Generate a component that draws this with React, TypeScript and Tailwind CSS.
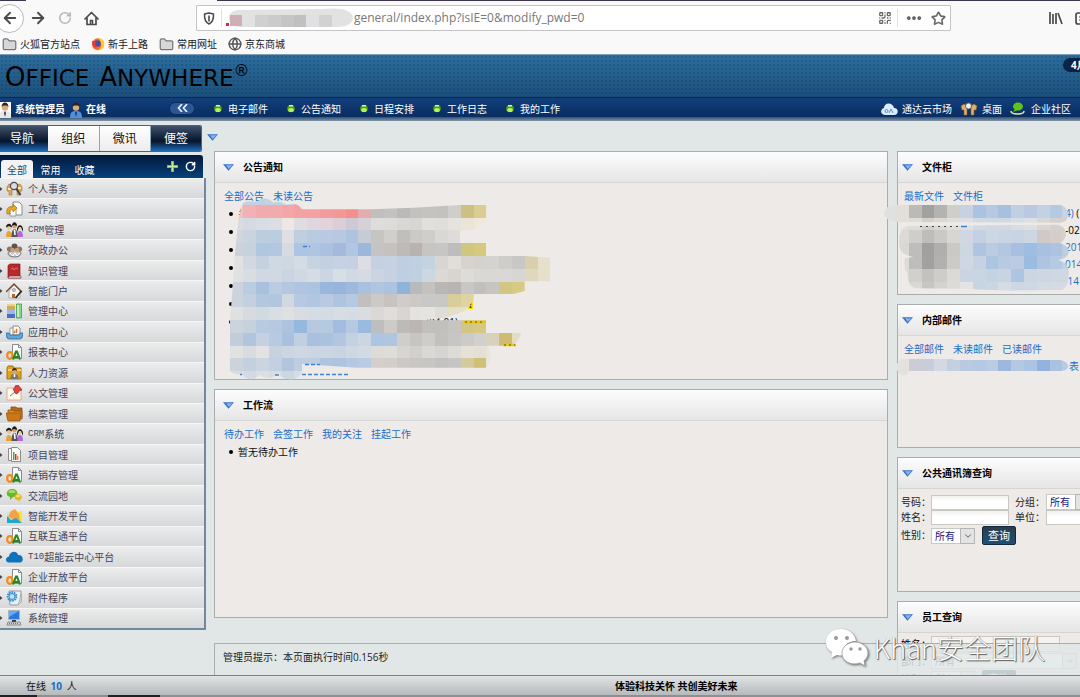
import React from "react";
import { ArrowLeft, ArrowRight, RotateCw, Star, Folder, Globe, ChevronDown, QrCode, Ellipsis } from "lucide-react";

const ui = "font-['Open_Sans','Noto_Sans_CJK_SC',sans-serif]";

type MenuItem = { icon: string; latin?: string; label: string };

const MENU: MenuItem[] = [
  { icon: "search", label: "个人事务" },
  { icon: "flow", label: "工作流" },
  { icon: "crm", latin: "CRM", label: "管理" },
  { icon: "group", label: "行政办公" },
  { icon: "book", label: "知识管理" },
  { icon: "portal", label: "智能门户" },
  { icon: "blocks", label: "管理中心" },
  { icon: "tray", label: "应用中心" },
  { icon: "oa", label: "报表中心" },
  { icon: "hr", label: "人力资源" },
  { icon: "pin", label: "公文管理" },
  { icon: "folders", label: "档案管理" },
  { icon: "crm", latin: "CRM", label: "系统" },
  { icon: "report", label: "项目管理" },
  { icon: "oa", label: "进销存管理" },
  { icon: "chat", label: "交流园地" },
  { icon: "picture", label: "智能开发平台" },
  { icon: "oa", label: "互联互通平台" },
  { icon: "cloud", latin: "T10", label: "超能云中心平台" },
  { icon: "oa", label: "企业开放平台" },
  { icon: "gear", label: "附件程序" },
  { icon: "computer", label: "系统管理" },
];

function Page({ d = "M6 1h7l3 3v11H6z" }: { d?: string }) {
  return <path d={d} fill="#fafafa" stroke="#8b8b8b" />;
}

const ICONS: Record<string, React.ReactNode> = {
  search: (
    <>
      <path d="M1 6l2-3 3 1v10H3v-4H1zM16 6l-2-3-3 1v10h3v-4h2z" fill="#dca55a" stroke="#a97431" strokeWidth=".6" />
      <path d="M2 7h3v2H2zM12 6h3v2h-3z" fill="#f6e3c0" />
      <circle cx="8" cy="5" r="3.6" fill="#d9dee1" stroke="#4b4b4b" strokeWidth="1.2" />
      <path d="M10.500 8l4 6" stroke="#3c3c3c" strokeWidth="1.800" />
    </>
  ),
  flow: (
    <>
      <Page d="M7 1h6l3 3v10H7z" />
      <path d="M4 6h6v9H4z" fill="#fff" stroke="#999" />
      <path d="M1 13C0 7 3 5 7 6V3l4 4-4 4V9C4 8 3 10 4 13z" fill="#eda91e" stroke="#a8730c" strokeWidth=".7" />
    </>
  ),
  crm: (
    <>
      <path d="M0 15c0-5 1-6 3-6s3 2 3 6z" fill="#e6a53b" />
      <path d="M11 15c0-5 1-6 3-6s3 2 3 6z" fill="#b566d9" />
      <path d="M5.500 15c0-5 1-8 3-8s3 3 3 8z" fill="#55555a" />
      <path d="M8 8h1v5z" fill="#fff" stroke="#fff" />
      <circle cx="3" cy="5.500" r="2.400" fill="#edc594" />
      <path d="M0 5.500c0-5 6-5 6 0L3 4z" fill="#1d1d1d" />
      <circle cx="8.500" cy="4" r="2.400" fill="#d99f6c" />
      <path d="M6 4c0-5 5-5 5 0L8 3z" fill="#1d1d1d" />
      <circle cx="14" cy="5.500" r="2.400" fill="#efc8a2" />
      <path d="M11 10c-1-9 7-9 6 0l-2-5-2 0z" fill="#151515" />
    </>
  ),
  group: (
    <>
      <ellipse cx="8.500" cy="11.500" rx="6.500" ry="3.500" fill="#c9c9c9" stroke="#777" />
      <circle cx="3.500" cy="7" r="2.600" fill="#8b7765" />
      <circle cx="13.500" cy="7" r="2.600" fill="#8b7765" />
      <circle cx="8.500" cy="4.500" r="3" fill="#5d5148" />
      <circle cx="6.500" cy="8" r="2.200" fill="#c99b78" />
      <circle cx="11" cy="8" r="2.200" fill="#c99b78" />
      <path d="M4 11l3 3 2-3 2 3 3-3" stroke="#fff" fill="none" />
    </>
  ),
  book: (
    <>
      <path d="M2 2.500L4 1h10v12l1 2H2z" fill="#b92a2d" stroke="#7e1d22" strokeWidth=".7" />
      <path d="M2 14.500L4 13h11v2H2z" fill="#ddd4cc" stroke="#8d2327" strokeWidth=".5" />
      <path d="M5 6l2-1 1 2 2-2 2 1" stroke="#e0837e" strokeWidth=".8" fill="none" />
    </>
  ),
  portal: (
    <>
      <path d="M3 8l5-6 6 6v7H3z" fill="#f8f5ef" stroke="#999" strokeWidth=".7" />
      <path d="M0 9l8-8 8 8" fill="none" stroke="#6f4a2f" strokeWidth="1.300" />
      <circle cx="8" cy="7" r="1.600" fill="#bcc9d5" stroke="#777" strokeWidth=".5" />
      <path d="M6 11h3v4H6z" fill="#ad6535" />
      <path d="M15.500 8l-6 7" stroke="#222" strokeWidth="1.800" />
    </>
  ),
  blocks: (
    <>
      <path d="M1 1h8v6H1z" fill="#cfab52" />
      <path d="M1 1h8v2H1z" fill="#ecd28f" />
      <path d="M1 7h8v8H1z" fill="#4d6dc2" />
      <path d="M1 7h8v4H1z" fill="#a3b5e6" />
      <path d="M10.500 1h5v14h-5z" fill="#88d587" stroke="#4d9b51" strokeWidth=".8" />
      <path d="M11 2h2v12h-2z" fill="#c3efc0" />
    </>
  ),
  tray: (
    <>
      <path d="M4 4h5l3 2v7H4z" fill="#fff" stroke="#999" />
      <path d="M7 2h5l2 2v7H7z" fill="#fafafa" stroke="#888" />
      <path d="M8 9V7h1v2zM10 9V5h1v4z" fill="#df5a2b" stroke="#df8e32" strokeWidth=".6" />
      <path d="M0 9h3l1 2h9l1-2h3l-1 5-2 1H3l-2-1z" fill="#5ea7d8" stroke="#24699c" strokeWidth=".8" />
    </>
  ),
  oa: (
    <>
      <Page d="M6.500.500h6l3 3v11h-9z" />
      <path d="M12.500.500v3h3" fill="none" stroke="#8b8b8b" />
      <ellipse cx="3.800" cy="11.500" rx="2.600" ry="3.300" fill="none" stroke="#f58a16" strokeWidth="2.200" />
      <path d="M7 15.500l3-8h1l3 8M8.500 13h5" fill="none" stroke="#218b22" strokeWidth="2.100" />
    </>
  ),
  hr: (
    <>
      <path d="M1 3l1-2h5l1 2h7v11H1z" fill="#dfa31e" stroke="#a6740d" />
      <path d="M2 4h13v2H2z" fill="#f4cf62" />
      <circle cx="8.500" cy="6.500" r="2.200" fill="#d8a77d" />
      <path d="M6 6c0-4 5-4 5 0L9 5z" fill="#30271e" />
      <path d="M4.500 14c0-4 1-5 4-5s4 1 4 5z" fill="#777" />
      <path d="M8.500 9v3" stroke="#fff" strokeWidth="1.500" />
    </>
  ),
  pin: (
    <>
      <path d="M1 3h14v12H1z" fill="#fffbe8" stroke="#e5aa8e" />
      <path d="M9 7l-5 4" stroke="#777" />
      <path d="M7 4l3 5 2-1 1-2 3-1-4-5-3 1v2z" fill="#dd4540" stroke="#a72424" strokeWidth=".7" />
    </>
  ),
  folders: (
    <>
      <path d="M5 1h5l1 1h5v10H5z" fill="#b96a15" stroke="#7b430b" strokeWidth=".7" />
      <path d="M2 4h5l1 1h8v8H2z" fill="#d88a2c" stroke="#7b430b" strokeWidth=".7" />
      <path d="M0 7h15l-1 8H2z" fill="#cb7718" stroke="#8f500e" strokeWidth=".7" />
    </>
  ),
  report: (
    <>
      <Page d="M2.500 1.500h7v12h-7z" />
      <Page d="M5.500.500h6l3 3v11h-9z" />
      <path d="M7 5h1.500v8H7z" fill="#5e9b42" />
      <path d="M9 7h1.500v6H9z" fill="#d83525" />
      <path d="M11 9h1.500v4H11z" fill="#f09224" />
    </>
  ),
  chat: (
    <>
      <path d="M6 1c7 0 7 8 1 8l-3 3V9C-1 8 0 1 6 1z" fill="#69b72c" />
      <ellipse cx="6" cy="3.500" rx="3.500" ry="1.500" fill="#a4dc6e" />
      <path d="M12 6c5 0 5 6 1 6l2 2-4-2c-4-1-3-6 1-6z" fill="#eab91d" />
      <ellipse cx="12" cy="8" rx="2.300" ry="1" fill="#fae27d" />
    </>
  ),
  picture: (
    <>
      <path d="M9 5l7-2v12H9z" fill="#f2ea28" />
      <path d="M1 4h6v8H1z" fill="#c7e7d0" />
      <path d="M2 9l3-6 4-2 4 5 1 8z" fill="#f7a04b" />
      <path d="M1 15V8l4 4 5-2 6 5z" fill="#22a7cf" />
    </>
  ),
  cloud: (
    <path d="M3 13.500c-4 0-4-5.500 0-6C4 1.500 11 1.500 12 6c6-.5 6 7.500 2 7.500z" fill="#0e73bd" />
  ),
  gear: (
    <>
      <path d="M3 1h12v11l-3 3H4z" fill="#e9f0f3" stroke="#999" />
      <path d="M15 4v8l-3 3c2-4 2-7 3-11z" fill="#fff" stroke="#aaa" />
      <circle cx="6" cy="6.500" r="4.300" fill="none" stroke="#318cd0" strokeWidth="2" strokeDasharray="1.600 .8" />
      <circle cx="6" cy="6.500" r="3" fill="#bfe1f8" stroke="#318cd0" />
    </>
  ),
  computer: (
    <>
      <path d="M2.500.500h11v9h-11z" fill="#2978e0" stroke="#aab3bb" />
      <path d="M3 1h10L3 7z" fill="#63acf5" />
      <path d="M6 10h4v2H6z" fill="#333" />
      <path d="M2 12h12l1 3H1z" fill="#d1d3d5" stroke="#777" strokeWidth=".8" />
      <path d="M3 13.500h10" stroke="#777" strokeDasharray="1 1" />
    </>
  ),
};

/* Pixelated privacy cover: rows of colour cells on a 12.8 unit grid. */
const CELL = 12.8;
type Row = [row: number, col: number, colors: string];

const NOTICE_ROWS: Row[] = [
  [14, 18, "ccd6e0 c4d1df c3d2e0 c3d2e0 c3d2e0 c8d4e0"],
  [15, 18, "ccd6e0 c4d1df c3d2e0 c3d2e0 cdd3de e8b2b6 d8d0cd d8d0cd d8d0cd d8d0cd d8d0cd d3d1ce cfcdca c9c7c5 c9c7c5 c9c7c5 c9c7c5 cfcdca cdc082 d9cd94"],
  [16, 18, "e9c3c5 f2b1b3 f1abac f1abac f2a6a8 f3a1a3 f3a2a2 f39b9a f39897 f68e8b e2adaf c1bfbe c3c2c0 bbbab8 c3c1bf c4c3c0 c3c2c0 d0cecb cdc082 d9cd94 e5dcba"],
  [17, 18, "d8dbe0 d5d9e1 d8dce3 dbdfe5 eee7e3 dfdde2 dfd7dd e2d3da dccdd6 cdcad6 d8d0d7 dfdddb dedcd9 dad8d5 d8d6d3 e2e0dc e0deda e5e3dc ebe5d8 eee9d9"],
  [18, 18, "d2d6dc cad4e0 bdcde0 bccde1 dfdfe3 c0cfe0 b9cbe1 b8c9e1 b9c8e1 aec3e0 c6ccd5 c6c5c2 d1cfcc c1bfbd cccac7 d0cecc dad8d5 dedcda eae6df"],
  [19, 18, "cbd2dc c7d2df b0c7e0 b1c8e0 d7dbe1 acc5e2 afc5e1 acc1df a3badd b1c6e2 9bb7dc c6c4c3 c5c1be bebab7 b8b3b0 c6c5c2 c7c6c4 bebdbb d1c680 d6c97d"],
  [20, 18, "e1e1e2 d1d8e1 c3d1e0 ced9e3 cfd8e2 d3dbe4 c6d4e2 c3d0e0 c6d2e2 c5d1e2 dcdee3 c3d1e2 c6d2e2 bfcee0 bfd0e0 c5d2e1 d8d6d2 e1deda d7d4d0 d3d2ce d5d3d0 cfcdca c9c7c4 d9cfac e6e0cb"],
  [21, 18, "e0e1e2 d9dde1 d0d8e2 d0d9e3 cbd5e1 d0d8e2 d5dce4 cbd6e2 d8dee5 d1d9e3 d6dbe3 cbd5e2 c6d2e2 bfcfe3 bfd0e0 cdd7e2 dcd9d5 d8d5d1 dedcd8 d9d8d4 dad8d4 dad8d4 d8d6d2 dfd8bd e6e0ca"],
  [22, 18, "cdd3db b9cde0 a9c1df bdcbe1 b5c7e0 afc4e0 abc4df 9bb6dc 97b5dc 9fb9dc a9c0de b0c5df acc3df 8eb4dc b7bbbe c5c1be b9b6b4 b7b5b4 c9c7c5 c1c0be c6c5c3 d2c782 d7cb83"],
  [23, 18, "cbd3dc c4d0df b3c7df b2c6de d0d8e1 b7c8e1 b1c7e1 b8c9e1 afc4df b6c9e2 c2c0bf cdc9c6 c6c3c1 cfccc9 cdc9c6 c9c8c6 c9c8c6 d7ce9b ddd4a2"],
  [24, 18, "dfe0e1 d7dbe0 d1d9e1 d8dee4 dee0e2 d9dde2 d5dde4 d5dbe4 d8dce3 d5dce3 dadcdf dad9d6 e0ddda d8d6d2 e6e3df e6e4e1 deddd9 e3dfc8 e6e0c8"],
  [25, 18, "cbd3dc c6d1de b8cadf b6c9e0 acc4e0 96b8df b9c8e1 b5c9e1 a4bce0 b6c9e1 9bbadf bdbfbf cecac7 bdbbb8 bbb6b3 c2c0bd c1c0be c6c5c2 d2c684 d6c880"],
  [26, 18, "c3cdd9 b1c5dd c5d1e3 b8c9e1 a9c1df c0cfe1 a9c0df aac2df b3c6e0 c3d1e1 ccd6e2 acc5e2 afc5e1 cfcecb c7c5c3 cecdca c2c1be c8c6c4 cdcbc9 d2d0cd d7d2bd cdbc71 e3dbc2"],
  [27, 18, "e0e1e2 d8dce1 e2e2e3 c7d2df ccd6e1 cfd8e2 cbd6e2 cbd6e3 c8d4e2 ced8e3 d2dbe5 dedbd6 dfddda d7d5d2 d2d0ce dad8d4 d6d4d0 dedbd7 e5e1d9 e5e0d6 e9e5de"],
  [28, 18, "ccd3db c4d0df cbd5e0 c3d0df b2c5df bdcde2 bccee2 aec4df adc3df b5c7e1 b9cbe2 d5cecc d3ceca ccc8c5 cac7c3 c7c6c4 c3c2c0 c7c5c3 d4ca9b cec078 e9e5de"],
  [29, 18, "d7dce1 d3dae3 dadfe5 d7dce1 cdd7df d4dce4"],
];

const FILE_ROWS: Row[] = [
  [15, 68, "dfe0df dfe0df e2dfdb d0cdca c5c3c0 cfccc9 dedbd7 c5cfe0 c0cfe0 c5d2e0 c5d2e0 c5d2e0"],
  [16, 68, "dfe1e0 dfe1e0 e2dfda bcbab8 a1a1a0 b4b3b1 cfcecb c6d1e2 aac3e2 b6c9e0 a7c0df c1cfe3 bac8e3 c2d1e3 b4cae3 c8d4e1"],
  [17, 68, "dfe1e0 dfe1e0 e2dfda dfddd9 d3d0cc dcd9d4 e0ded9 dde0e3 d1dae3 cfd9e3 d0d9e3 d7dde3 dce0e3 dad6d3 d5d0ce d4cfce"],
  [18, 68, "e0e1e0 e0e1e0 dcdad7 d0cecb bfbdbb cbc9c6 d8d6d3 d1d7e2 c3d1e3 cdd7e3 c9d5e3 c8d4e3 cdd7e4 cfcac7 d3ceca d6d1cd"],
  [19, 69, "dedcd9 dad8d5 bebdbb a0a09f b0afad cac9c6 ced6e2 adc5e1 bacbe2 b3c7e2 a7bfe0 9dbee0 a8c1e0 adc3e1 bdcde1"],
  [20, 69, "dedcd9 dddbd8 bfbdbb a1a1a0 b3b1af cccbc8 ced7e3 c5d2e3 acc6e1 b8cae2 bdcbe2 9bbce1 aec4e1 b5cae2 c1d0e2"],
  [21, 69, "dedcd9 dbdad6 d2d0cd c3c2c0 cfcdca dcdad7 cad4e2 c8d5e2 c5d2e2 c8d4e2 acc5e2 cbd5e3 ced6e3 ced7e2 ced8e3"],
  [22, 69, "dedcd9 dbdad6 dad8d4 c8c6c4 d4d3d0 dddbd8 e4e3e5 c8d4e1 cbd6e3 d6dce4 ced7e3 ced7e3 d3dae4 d4dbe4 d2dae3"],
];

const MAIL_ROWS: Row[] = [
  [27, 69, "e4e2dc e4e2dc e3e0dc e3e0dc e0dfdc dedddb"],
  [28, 69, "e4e2dc e4e2dc cdcbd5 c9cdda d3d9e3 c3d0e2 b8c9e1 b5c9e2 bbcbe2 9cb8dd b6c8e1 acc3e1 92b3de aac1e0 b7cce3"],
  [29, 69, "e4e2dc e4e2dc"],
];

function Mosaic({ id, rows, outline, origin }: { id: string; rows: Row[]; outline: string; origin: [number, number] }) {
  return (
    <>
      <clipPath id={id}>
        <path d={outline} transform={`translate(${origin[0]} ${origin[1]}) scale(0.33333)`} />
      </clipPath>
      <g clipPath={`url(#${id})`} shapeRendering="crispEdges">
        {rows.map(([r, c, colors]) =>
          colors.split(" ").map((color, i) => (
            <rect key={`${r}-${i}`} x={(c + i) * CELL} y={r * CELL} width={CELL} height={CELL} fill={`#${color}`} />
          ))
        )}
      </g>
    </>
  );
}

function Covers() {
  return (
    <svg className="pointer-events-none absolute left-0 top-0 h-full w-full overflow-hidden" aria-hidden="true">
      <g transform="translate(0 -121)">
        <Mosaic
          id="cover-notice"
          rows={NOTICE_ROWS}
          origin={[210, 140]}
          outline="M98 190Q110 180 138 186Q165 164 190 188Q210 180 230 194Q262 184 276 208L483 208L610 203L750 195L829 195V250Q800 274 750 272V309H829V348H944L1020 353V424H944V453L910 462H791V482L765 512L714 532L640 541H829V578H934Q925 605 905 617H835Q852 650 829 683H440L276 672V695Q265 720 240 718Q215 718 205 698Q180 728 150 705Q120 732 95 703Q50 710 55 655Q65 620 55 585Q60 545 65 480L75 340L85 240Z"
        />
        <Mosaic
          id="cover-files"
          rows={FILE_ROWS}
          origin={[860, 140]}
          outline="M105 195H600Q625 200 625 225Q622 247 600 248L110 246Q72 240 72 220Q76 196 105 195ZM140 258L500 255L595 254Q620 262 618 285Q612 305 600 309Q628 318 625 340Q622 355 595 360Q628 370 626 400Q628 440 605 450L450 452L300 446L165 445Q140 435 143 400Q130 385 135 355L160 351Q116 345 118 310Q115 270 140 258Z"
        />
        <Mosaic
          id="cover-mail"
          rows={MAIL_ROWS}
          origin={[860, 140]}
          outline="M125 657L275 657L285 660L600 660Q625 665 625 680Q620 693 600 693L150 693Q140 712 122 705Q105 690 112 670Z"
        />
        <path d="M303 246.500h7M305 364.500h15M240 374.500h2M275 375h5M302 374.500h48" stroke="#3c82d6" strokeWidth="1.500" strokeDasharray="4 2" fill="none" />
        <path d="M464 322h22M503 345h13" stroke="#e6c90c" strokeWidth="2.500" />
        <path d="M465 322h20M504 345h11" stroke="#5b4b12" strokeWidth="1" strokeDasharray="2 3" />
        <path d="M920 226.500h38" stroke="#444" strokeWidth="1" strokeDasharray="2 4" />
        <path d="M961 226.500h6" stroke="#3c82d6" strokeWidth="1.500" />
      </g>
    </svg>
  );
}

function Triangle() {
  return (
    <svg width="11" height="7" viewBox="0 0 11 7" className="shrink-0" aria-hidden="true">
      <path d="M0 .3h11L5.500 6.800z" fill="#3570cf" />
      <path d="M3 1.200h6.500L5.800 5z" fill="#86b2ee" />
    </svg>
  );
}

function Panel({ title, className, inset = "pl-[8px]", children }: { title: string; className: string; inset?: string; children: React.ReactNode }) {
  return (
    <section className={`overflow-hidden border border-[#a9adb0] bg-[#eeeae7] ${className}`}>
      <h2 className={`flex h-[31px] items-center gap-[9px] border-b border-[#d6d6d6] bg-gradient-to-b from-[#fdfdfd] to-[#e5e5e5] text-[10px] font-bold text-black ${inset}`}>
        <Triangle />
        {title}
      </h2>
      {children}
    </section>
  );
}

function Links({ items, inset = "pl-[9px]" }: { items: string[]; inset?: string }) {
  return (
    <nav className={`flex gap-[9px] pt-[5px] text-[10px] leading-[17px] text-[#1a6dcc] ${inset}`}>
      {items.map((t) => (
        <a key={t} href="#" className="whitespace-nowrap">{t}</a>
      ))}
    </nav>
  );
}

function Bullet({ children }: { children?: React.ReactNode }) {
  return (
    <li className="flex h-[18px] items-center gap-[5px] text-[10px] text-[#111]">
      <span className="size-[4px] shrink-0 rounded-full bg-black" />
      {children}
    </li>
  );
}

function Pick({ id, className }: { id: string; className: string }) {
  return (
    <span className={`relative inline-flex h-[16px] items-center ${className}`}>
      <select id={id} className="h-full w-full appearance-none border border-[#c9c9c3] bg-white pl-[3px] text-[10px] leading-[14px] text-[#14147d]">
        <option>所有</option>
      </select>
      <span className="pointer-events-none absolute bottom-0 right-0 top-0 flex w-[15px] items-center justify-center border border-[#b5b5b5] bg-[#e3e3e3]">
        <ChevronDown size={10} className="text-[#444]" />
      </span>
    </span>
  );
}

const field = "h-[15px] w-[78px] border border-[#c9c7c0] bg-gradient-to-b from-[#f0f0ee] to-white to-40%";

function ContactQuery() {
  return (
    <form className="flex flex-col gap-px pl-[3px] pt-[5px] text-[10px] text-[#222]">
      <div className="grid w-[260px] grid-cols-[30px_84px_31px_100px] items-center leading-[15px]">
        <label htmlFor="contact-no">号码：</label>
        <input id="contact-no" className={field} />
        <label htmlFor="contact-group">分组：</label>
        <Pick id="contact-group" className="w-[44px]" />
        <label htmlFor="contact-name">姓名：</label>
        <input id="contact-name" className={field} />
        <label htmlFor="contact-unit">单位：</label>
        <input id="contact-unit" className={field} />
      </div>
      <div className="flex items-center">
        <label htmlFor="contact-sex" className="w-[30px]">性别：</label>
        <Pick id="contact-sex" className="w-[44px]" />
        <button type="button" className="ml-[7px] h-[19px] w-[34px] rounded-[2px] border border-[#12293c] bg-gradient-to-b from-[#2b3d4b] to-[#1f4f75] text-[11px] leading-[16px] text-white">
          查询
        </button>
      </div>
    </form>
  );
}

function StaffQuery() {
  return (
    <form className="grid w-[260px] grid-cols-[30px_200px] items-center gap-y-[1px] pl-[3px] pt-[3px] text-[10px] leading-[16px]">
      <label htmlFor="staff-name">姓名：</label>
      <input id="staff-name" className="h-[16px] w-[129px] border border-[#c9c7c0] bg-[#f4f3f0]" />
      <label htmlFor="staff-dept">部门：</label>
      <Pick id="staff-dept" className="w-[146px]" />
      <label htmlFor="staff-sex">性别：</label>
      <div className="flex items-center gap-[7px]">
        <Pick id="staff-sex" className="w-[44px]" />
        <button type="button" className="h-[18px] w-[34px] rounded-[2px] bg-[#24425a] text-[11px] leading-[16px] text-white">查询</button>
      </div>
    </form>
  );
}

function Chrome() {
  return (
    <header className="shrink-0 bg-[#f9f9fa] text-[#4a4a4f]">
      <div className="flex h-px">
        <span className="w-[26px] bg-[#3b364c]" />
        <span className="w-[191px]" />
        <span className="flex-1 bg-[#3b364c]" />
      </div>
      <div className="flex h-[34px] items-center overflow-hidden">
        <div className="flex w-[196px] shrink-0 items-center">
          <button aria-label="后退" className="-ml-[5px] flex size-[29px] shrink-0 items-center justify-center rounded-full border border-[#b9b9bb] bg-white">
            <ArrowLeft size={18} strokeWidth={2.500} />
          </button>
          <button aria-label="前进" className="ml-[5px]"><ArrowRight size={18} strokeWidth={2.500} /></button>
          <button aria-label="刷新" className="ml-[11px] text-[#b9b9bb]"><RotateCw size={14} strokeWidth={2.800} /></button>
          <button aria-label="主页" className="ml-[12px]">
            <svg width="15" height="15" viewBox="0 0 15 15" aria-hidden="true">
              <path d="M1 8l6.500-6.500L14 8M3 7v6.500h9V7" fill="none" stroke="#4a4a4f" strokeWidth="1.700" strokeLinejoin="round" strokeLinecap="round" />
              <path d="M6.500 13V9.500h2V13" fill="none" stroke="#4a4a4f" strokeWidth="1.500" />
            </svg>
          </button>
        </div>
        <div className="flex h-[26px] w-[755px] shrink-0 items-center rounded-[1px] border border-[#c4c4c6] bg-white pl-[6px] pr-[4px]">
          <svg width="12" height="13" viewBox="0 0 12 13" className="shrink-0" aria-hidden="true">
            <path d="M6 1l4.500 1c.3 5-.7 8-4.500 10C2.200 10 1.200 7 1.500 2z" fill="none" stroke="#4a4a4f" strokeWidth="1.500" strokeLinejoin="round" />
            <path d="M6 3.500v6" stroke="#4a4a4f" strokeWidth="1.600" />
          </svg>
          <span className="ml-[6px] h-[18px] w-px bg-[#e0e0e1]" />
          <svg width="128" height="20" viewBox="0 0 128 20" className="ml-[4px] shrink-0" aria-hidden="true">
            <path d="M0 15h3v3H0z" fill="#d7264a" />
            <path d="M12 2L95 1Q126-2 127 10Q126 19 110 19H14Q3 19 3 10Q3 3 12 2z" fill="#e2e2e3" />
            <path d="M4 7h12v11H4z" fill="#cfafb6" />
            <path d="M29 7h13v12H29z" fill="#d0d0d0" />
            <path d="M42 7h13v12H42z" fill="#cbcbcc" />
            <path d="M55 7h13v12H55z" fill="#c5c5c5" />
            <path d="M68 7h12v12H68z" fill="#c0c0c0" />
            <path d="M80 7h13v12H80z" fill="#e0e0e2" />
            <path d="M93 7h13v12H93z" fill="#d2d2d3" />
          </svg>
          <label htmlFor="address" className="hidden">地址</label>
          <input
            id="address"
            readOnly
            value="general/index.php?isIE=0&modify_pwd=0"
            className="min-w-0 flex-1 bg-transparent text-[12px] text-[#77777a] outline-none"
          />
          <QrCode size={14} strokeWidth={2.200} className="text-[#66666a]" />
          <span className="ml-[5px] h-[18px] w-px bg-[#e0e0e1]" />
          <Ellipsis size={18} strokeWidth={3} className="ml-[7px] text-[#555]" />
          <Star size={15} strokeWidth={2.600} className="ml-[8px] text-[#666]" />
        </div>
        <svg width="36" height="16" viewBox="0 0 36 16" className="ml-[97px] shrink-0" aria-hidden="true">
          <path d="M2 2v12M5 4v10M8 3v11M10 3l4 11" stroke="#4a4a4f" strokeWidth="1.700" fill="none" />
          <rect x="28" y="3" width="14" height="11" rx="2" stroke="#4a4a4f" strokeWidth="1.700" fill="none" />
          <path d="M31 7h5M31 10h5" stroke="#4a4a4f" />
        </svg>
      </div>
      <nav className="flex h-[19px] items-center pb-px pl-[2px] text-[10px] text-[#18181a]">
        <a href="#" className="flex w-[89px] items-center gap-[3px]"><Folder size={15} strokeWidth={2} className="fill-[#d7d7d9] text-[#77777a]" />火狐官方站点</a>
        <a href="#" className="flex w-[68px] items-center gap-[3px]">
          <svg width="14" height="14" viewBox="0 0 14 14" aria-hidden="true">
            <circle cx="7" cy="7.300" r="6" fill="#f5682a" />
            <path d="M7 1c5 0 7 4 6 8-1 3-4 5-7 4 5-1 6-6 1-12z" fill="#ffca2d" />
            <circle cx="6.500" cy="6.500" r="3.200" fill="#3454b4" />
            <path d="M1 4c2 0 3 1 5 2-2 0-2 3 1 3-2 3-6 1-6-5z" fill="#e8323c" />
          </svg>
          新手上路
        </a>
        <a href="#" className="flex w-[69px] items-center gap-[3px]"><Folder size={15} strokeWidth={2} className="fill-[#d7d7d9] text-[#77777a]" />常用网址</a>
        <a href="#" className="flex items-center gap-[3px]"><Globe size={14} strokeWidth={2.400} className="text-[#555]" />京东商城</a>
      </nav>
    </header>
  );
}

function Person({ coat, className }: { coat: string; className: string }) {
  return (
    <svg width="12" height="16" viewBox="0 0 12 16" className={`shrink-0 ${className}`} aria-hidden="true">
      <path d="M0 16c0-6 2-7 6-7s6 1 6 7z" fill={coat} />
      <path d="M6 9l-1 2 1 4 1-4z" fill="#234" />
      <circle cx="6" cy="5.500" r="3.200" fill="#dba97e" />
      <path d="M2.500 5c0-6 7-6 7 0L8 3.500H4z" fill="#2c2018" />
    </svg>
  );
}

function TopBar() {
  return (
    <div className="shrink-0">
      <div className="flex h-[43px] items-start justify-between overflow-hidden border-t border-[#7d9eb5] bg-[radial-gradient(circle,rgba(8,40,75,0.2)_0.700px,transparent_1px),linear-gradient(#2d6d9c,#1b4f7b)] bg-[length:4px_4px,100%_100%]">
        <h1 className="flex items-baseline pl-[5px] pt-[6px] font-['DejaVu_Sans',sans-serif] text-[23px] leading-[32px] text-black">
          <span className="text-[26px]">O</span>FFICE<span className="ml-[10px] text-[26px]">A</span>NYWHERE
          <span className="self-start text-[16px] leading-[20px]">®</span>
        </h1>
        <span className="mt-[3px] h-[14px] w-[17px] overflow-hidden whitespace-nowrap rounded-l-full bg-[#0a2347] pl-[8px] text-[10px] font-bold leading-[14px] text-white">4月</span>
      </div>
      <div className="flex h-[20px] items-center border-t border-[#0a2a56] bg-gradient-to-b from-[#123f7b] to-[#082d62] text-[10px] text-white">
        <div className="flex w-[214px] shrink-0 items-center pt-[4px] font-bold">
          <Person coat="#e8e8e8" className="-ml-px bg-white" />
          <span className="ml-[4px]">系统管理员</span>
          <Person coat="#4d90dc" className="ml-[5px]" />
          <span className="ml-[4px]">在线</span>
          <button aria-label="收起" className="mb-[3px] ml-[63px] flex h-[13px] w-[26px] items-center justify-center rounded-full border border-[#0a2a58] bg-[#2b5795]">
            <svg width="11" height="8" viewBox="0 0 11 8" aria-hidden="true">
              <path d="M5 0L1.500 4L5 8M10 0L6.500 4L10 8" fill="none" stroke="#e6eefa" strokeWidth="1.700" />
            </svg>
          </button>
        </div>
        <nav className="flex gap-[21px] pt-[3px]">
          {["电子邮件", "公告通知", "日程安排", "工作日志", "我的工作"].map((t) => (
            <a key={t} href="#" className="flex w-[52px] items-center gap-[6px] whitespace-nowrap">
              <svg width="8" height="10" viewBox="0 0 8 10" className="shrink-0" aria-hidden="true">
                <circle cx="4" cy="4.500" r="3.800" fill="#4f9d17" />
                <ellipse cx="4" cy="6" rx="2.800" ry="2" fill="#b6f45c" />
                <path d="M2 1h4v1.500H2z" fill="#d5edc4" />
              </svg>
              {t}
            </a>
          ))}
        </nav>
        <nav className="ml-auto flex shrink-0 items-center pr-[9px] pt-[3px]">
          <a href="#" className="flex items-center gap-[4px]">
            <svg width="17" height="13" viewBox="0 0 17 13" aria-hidden="true">
              <path d="M4 12C-1 12-1 6 3 5c0-6 9-6 10 0 5 0 5 7 0 7z" fill="#dcecfb" />
              <path d="M7 8a1.500 1.500 0 1 0-3 0 1.500 1.500 0 0 0 3 0M8 10l2-4 2 4" fill="none" stroke="#4d93d4" />
            </svg>
            通达云市场
          </a>
          <a href="#" className="ml-[8px] flex items-center gap-[4px]">
            <svg width="18" height="14" viewBox="0 0 18 14" aria-hidden="true">
              <path d="M1 4l3-2 3 2v9H4V8H2zM17 4l-3-2-3 2v9h3V8h2z" fill="#e0ae6c" stroke="#8e5c26" strokeWidth=".6" />
              <circle cx="8.500" cy="4" r="3" fill="#eef0f2" stroke="#666" />
            </svg>
            桌面
          </a>
          <a href="#" className="ml-[8px] flex items-center gap-[6px]">
            <svg width="15" height="14" viewBox="0 0 15 14" aria-hidden="true">
              <path d="M1 9q0 3 6.500 3T14 9" fill="none" stroke="#e4e894" strokeWidth="1.500" />
              <ellipse cx="8" cy="4.500" rx="5" ry="4" fill="#5fc318" />
              <path d="M5 7l-2 3 5-2z" fill="#5fc318" />
            </svg>
            企业社区
          </a>
        </nav>
      </div>
      <div className="h-[4px] bg-gradient-to-b from-[#35516f] to-[#8496a8]" />
    </div>
  );
}

function Sidebar() {
  const light = "flex-1 border-r border-[#90a7b5] bg-gradient-to-b from-white to-[#ececec] text-[#111]";
  const dark = "bg-gradient-to-b from-[#41536b] via-[#06162c] via-60% to-[#1d6cb8] text-white";
  return (
    <aside className="w-[206px] shrink-0 pt-[4px]">
      <div className="flex h-[27px] w-[202px] overflow-hidden rounded-r-[2px] border border-l-0 border-[#4a6480] text-[12px]">
        <button className={`w-[48px] pr-[4px] ${dark}`}>导航</button>
        <button className={light}>组织</button>
        <button className={light}>微讯</button>
        <button className={`w-[50px] ${dark}`}>便签</button>
      </div>
      <div className="mt-[3px] flex h-[23px] w-[203px] items-end rounded-tr-[3px] bg-gradient-to-b from-[#03193b] to-[#07427d] text-[10px] text-white">
        <button className="ml-px h-[18px] w-[32px] rounded-t-[3px] bg-[#f3f3f3] leading-[20px] text-[#1c4a7c]">全部</button>
        <button className="ml-[6px] h-[18px] w-[23px] leading-[20px]">常用</button>
        <button className="ml-[11px] h-[18px] w-[23px] leading-[20px]">收藏</button>
        <button aria-label="添加" className="mb-[6px] ml-auto">
          <svg width="11" height="11" viewBox="0 0 11 11" className="block" aria-hidden="true">
            <path d="M4 0h3v4h4v3H7v4H4V7H0V4h4z" fill="#76c934" />
            <path d="M5 1h1v9H5zM1 5h9v1H1z" fill="#c8f090" />
          </svg>
        </button>
        <button aria-label="刷新" className="mb-[6px] ml-[7px] mr-[7px]"><RotateCw size={11} strokeWidth={3.200} className="block" /></button>
      </div>
      <ul className="grid h-[452px] auto-rows-fr border-b-2 border-r-2 border-[#7089a0]">
        {MENU.map((m, i) => (
          <li key={i} className="min-h-0">
            <a href="#" className="flex h-full items-center border-t border-[#f7f7f7] bg-gradient-to-b from-[#ececec] to-[#d6d8da] text-[10px] leading-[18px] text-[#44445a]">
              <svg width="3" height="6" viewBox="0 0 3 6" className="shrink-0" aria-hidden="true"><path d="M0 1l2.500 2L0 5z" fill="#444" /></svg>
              <svg width="17" height="16" viewBox="0 0 17 16" className="ml-[3px] mr-[5px] shrink-0" aria-hidden="true">{ICONS[m.icon]}</svg>
              {m.latin && <span className="font-['Liberation_Mono',monospace] text-[9px]">{m.latin}</span>}
              <span>{m.label}</span>
            </a>
          </li>
        ))}
      </ul>
    </aside>
  );
}

export default function App() {
  return (
    <div className={`flex h-screen flex-col overflow-hidden bg-[#e1e6e6] ${ui}`}>
      <Chrome />
      <TopBar />
      <div className="relative flex min-h-0 flex-1 overflow-hidden">
        <Sidebar />
        <main className="flex min-w-0 flex-1 flex-col">
          <div className="flex h-[30px] shrink-0 items-center pl-px pt-[3px]"><Triangle /></div>
          <div className="flex min-h-0 flex-1 gap-[9px] pl-[8px]">
            <div className="flex min-w-0 flex-1 flex-col gap-[9px]">
              <Panel title="公告通知" className="h-[229px] shrink-0">
                <Links items={["全部公告", "未读公告"]} />
                <ul className="pl-[14px]">
                  <Bullet><span className="text-[#f02a1c]">关</span></Bullet>
                  <Bullet><span className="pl-[178px]">(04-25)</span></Bullet>
                  <Bullet />
                  <Bullet />
                  <Bullet />
                  <Bullet><span className="ml-[230px] bg-[#f7e200] px-px font-bold leading-[9px]">!</span></Bullet>
                  <Bullet><span className="pl-[188px]">(04-01)</span></Bullet>
                </ul>
              </Panel>
              <Panel title="工作流" className="h-[229px] shrink-0">
                <Links items={["待办工作", "会签工作", "我的关注", "挂起工作"]} />
                <ul className="pl-[14px]"><Bullet>暂无待办工作</Bullet></ul>
              </Panel>
            </div>
            <div className="flex w-[183px] shrink-0 flex-col gap-[9px] overflow-hidden">
              <Panel title="文件柜" inset="pl-[4px]" className="h-[144px] w-[260px] shrink-0">
                <Links items={["最新文件", "文件柜"]} inset="pl-[6px]" />
                <ul className="pl-[167px] text-[10px] leading-[17px] text-[#1a6dcc]">
                  <li>4) <span className="text-black">(</span></li>
                  <li className="text-black">-02</li>
                  <li>201</li>
                  <li>014</li>
                  <li>&nbsp;14</li>
                </ul>
              </Panel>
              <Panel title="内部邮件" inset="pl-[4px]" className="h-[144px] w-[260px] shrink-0">
                <Links items={["全部邮件", "未读邮件", "已读邮件"]} inset="pl-[6px]" />
                <a href="#" className="block pl-[171px] text-[10px] leading-[17px] text-[#1a6dcc]">表</a>
              </Panel>
              <Panel title="公共通讯簿查询" inset="pl-[4px]" className="h-[135px] w-[260px] shrink-0">
                <ContactQuery />
              </Panel>
              <Panel title="员工查询" inset="pl-[4px]" className="h-[135px] w-[260px] shrink-0">
                <StaffQuery />
              </Panel>
            </div>
          </div>
        </main>
        <Covers />
        <p className="absolute bottom-0 left-[214px] right-0 h-[32px] border-l border-t border-[#a9adb0] bg-[#e1e6e6]/85 pl-[8px] text-[10px] leading-[27px] text-[#222]">
          管理员提示：本页面执行时间0.156秒
        </p>
      </div>
      <footer className="shrink-0">
        <div className="flex h-[20px] items-center border-t border-[#6f8396] bg-gradient-to-b from-[#e2e4e5] to-[#b5babd] pt-[2px] text-[10px] text-[#111]">
          <span className="w-[615px] shrink-0 pl-[26px]">在线 <b className="mx-[2px] text-[#1a6dcc]">10</b> 人</span>
          <b className="text-black">体验科技关怀 共创美好未来</b>
        </div>
        <div className="flex h-[2px] bg-[#8d9092]">
          <span className="w-[37px] bg-[#222]" />
          <span className="ml-[71px] w-[52px] bg-[#222]" />
        </div>
      </footer>
      <div className="pointer-events-none absolute bottom-[31px] right-[35px] flex items-center gap-[5px]">
        <svg width="43" height="37" viewBox="0 0 43 37" className="drop-shadow-[1px_1px_1px_rgba(60,60,60,0.7)]" aria-hidden="true">
          <path d="M15 0C6 0 0 6 0 13c0 4 2 8 6 10l-1 6 6-3q4 1 7 0C16 17 22 12 30 12 29 5 23 0 15 0z" fill="#fff" />
          <path d="M29 13c7 0 13 5 13 11 0 4-2 6-4 8l1 5-5-3c-10 3-18-2-18-10 0-6 6-11 13-11z" fill="#fff" stroke="#9a9a9a" strokeWidth=".8" />
          <circle cx="10" cy="9" r="2" fill="#999" />
          <circle cx="21" cy="9" r="2" fill="#999" />
          <circle cx="25" cy="20" r="1.700" fill="#999" />
          <circle cx="34" cy="20" r="1.700" fill="#999" />
        </svg>
        <span className="font-['Noto_Sans_CJK_SC',sans-serif] text-[27px] leading-[32px] font-light text-white [text-shadow:1px_1px_1px_#555,0_0_1px_#777]">Khan安全团队</span>
      </div>
    </div>
  );
}
